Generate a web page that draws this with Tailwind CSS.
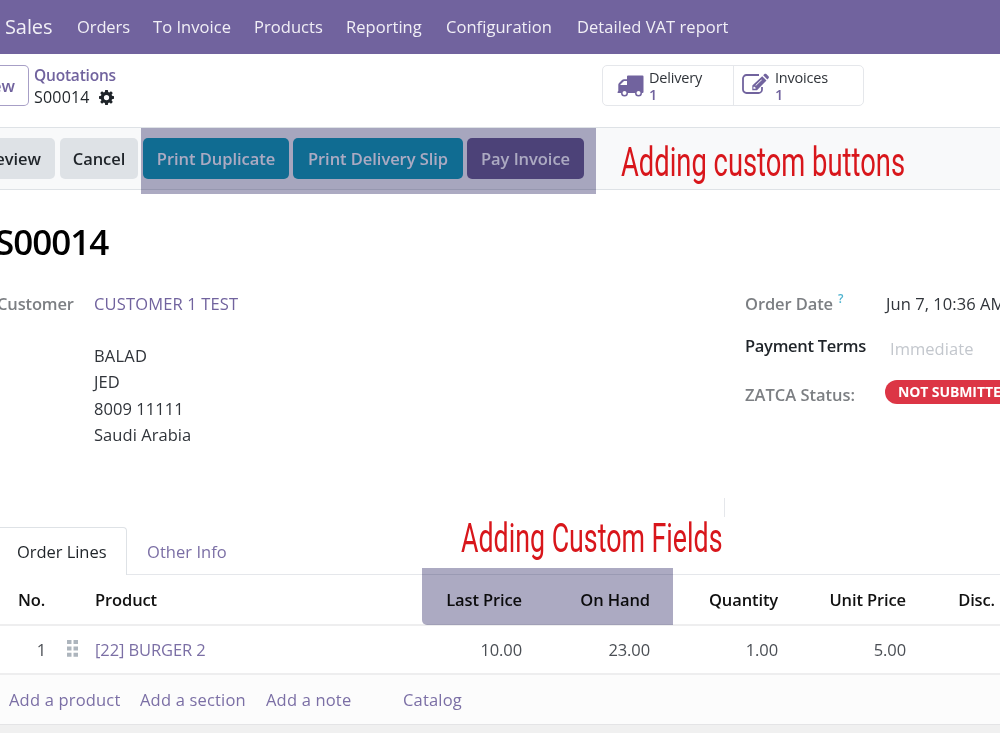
<!DOCTYPE html>
<html lang="en">
<head>
    <meta charset="UTF-8">
    <meta name="viewport" content="width=device-width, initial-scale=1.0">
    <title>S00014 - Quotations</title>
    <script src="https://cdn.jsdelivr.net/npm/@tailwindcss/browser@4"></script>
</head>
<body class="bg-white overflow-hidden">
    <div class="relative isolate w-[1000px] h-[750px] overflow-hidden bg-white font-['Open_Sans','Noto_Sans',sans-serif] text-[16.5px] leading-[26px] tracking-[0.05px] text-[#30343a] whitespace-nowrap">

        <!-- Navbar -->
        <nav class="h-[54px] bg-[#71639e] text-[#f1eff6] flex items-center pl-[5px]">
            <div class="w-[72px] shrink-0 text-[20px] tracking-[-0.1px]">Sales</div>
            <div class="w-[76px] shrink-0 tracking-[-0.1px]">Orders</div>
            <div class="w-[101px] shrink-0">To Invoice</div>
            <div class="w-[92px] shrink-0">Products</div>
            <div class="w-[100px] shrink-0">Reporting</div>
            <div class="w-[131px] shrink-0">Configuration</div>
            <div>Detailed VAT report</div>
        </nav>

        <!-- Control panel -->
        <header class="h-[73px] flex items-start pt-[11px]">
            <button class="w-[29px] shrink-0 h-[41px] border border-l-0 border-[#a79fc6] rounded-r-[5px] text-[#71639e] font-semibold flex items-center justify-end pt-px pr-[13px]">New</button>
            <div class="ml-[5px] mt-[-1px] w-[568px] shrink-0">
                <div class="text-[15.5px] leading-[22px] tracking-[-0.2px] font-semibold text-[#71639e]">Quotations</div>
                <div class="flex items-center leading-[22px] text-[16px] text-[#1f2429]">
                    <span class="w-[65px] tracking-[0.2px]">S00014</span>
                    <svg class="w-[15px] h-[15px]" viewBox="0 0 16 16" fill="#1f2429">
                        <path fill-rule="evenodd" d="M6.6 0h2.8l.4 2.1 1.2.5L12.8 1.3l1.9 1.9L13.4 5l.5 1.2 2.1.4v2.8l-2.1.4-.5 1.2 1.3 1.8-1.9 1.9L11 13.4l-1.2.5L9.4 16H6.6l-.4-2.1L5 13.4l-1.8 1.3-1.9-1.9L2.6 11l-.5-1.2L0 9.4V6.600l2.100-.4L2.600 5 1.300 3.200l1.900-1.900L5 2.600l1.200-.5zM8 5.200a2.800 2.800 0 1 0 0 5.600 2.800 2.800 0 0 0 0-5.600z"/>
                    </svg>
                </div>
            </div>
            <div class="flex w-[262px] h-[41px] border border-[#e5e7eb] rounded-[5px] text-[14.5px] leading-[17px] tracking-[-0.2px]">
                <div class="w-[131px] shrink-0 flex border-r border-[#e5e7eb] pl-[14px]">
                    <svg class="w-[27px] h-[22px] mt-[9px] mr-[5px]" viewBox="0 0 27 22" fill="#71639e">
                        <path fill-rule="evenodd" d="M11 .5h14.500a1 1 0 0 1 1 1V17a1 1 0 0 1-1 1H25a3.500 3.500 0 0 1-7 0h-7a3.500 3.500 0 0 1-7 0H1.500C.5 18 .5 17.500.5 17l.8-1V10c0-1 .2-1.500.8-2.100L5 5c.6-.6 1.200-.8 2-.8h3V1.500a1 1 0 0 1 1-1zM7 6 3.400 9.600V10H10V6zM7.500 16a2 2 0 1 0 0 4 2 2 0 0 0 0-4zm14 0a2 2 0 1 0 0 4 2 2 0 0 0 0-4z"/>
                    </svg>
                    <div class="pt-[3px]">
                        <div>Delivery</div>
                        <div class="font-semibold text-[#71639e]">1</div>
                    </div>
                </div>
                <div class="flex pl-[8px]">
                    <svg class="w-[27px] h-[22px] mt-[7px] mr-[6px]" viewBox="0 0 27 22" fill="none">
                        <path d="M17 2H4.500A3.500 3.500 0 0 0 1 5.500v11A3.500 3.500 0 0 0 4.500 20h12a3.500 3.500 0 0 0 3.500-3.500V14" stroke="#71639e" stroke-width="1.8"/>
                        <path fill="#71639e" fill-rule="evenodd" d="M20.200 3.200l4.300 4.300L15 17.200H10.300v-4.600zM12 13.500l-.6.700v1.600h1.800l.7-.7zM19.400 6.500l-6 5.800.5.500 6-5.800zM21.200 2.200l1.200-1.100c.6-.6 1.300-.6 1.900 0l2.200 2.200c.6.6.6 1.300 0 1.900L25.400 6.400z"/>
                    </svg>
                    <div class="pt-[3px]">
                        <div>Invoices</div>
                        <div class="font-semibold text-[#71639e]">1</div>
                    </div>
                </div>
            </div>
        </header>

        <!-- Action buttons -->
        <section class="relative h-[63px] bg-[#f8f9fa] border-y border-[#dee2e6] flex items-start pt-[10px] font-semibold tracking-[-0.05px]">
            <button class="w-[55px] shrink-0 h-[41px] mr-[5px] rounded-r-[5px] bg-[#dee2e6] text-[#1f2429] flex items-center justify-end pt-px pr-[14px]">Preview</button>
            <button class="w-[78px] shrink-0 h-[41px] mr-[5px] pt-px rounded-[5px] bg-[#dee2e6] text-[#1f2429]">Cancel</button>
            <button class="w-[146px] shrink-0 h-[41px] mr-[4px] pt-px rounded-[5px] bg-[#17a2c0] text-white">Print Duplicate</button>
            <button class="w-[170px] shrink-0 h-[41px] mr-[4px] pt-px rounded-[5px] bg-[#17a2c0] text-white">Print Delivery Slip</button>
            <button class="w-[117px] shrink-0 h-[41px] pt-px rounded-[5px] bg-[#71639e] text-white">Pay Invoice</button>
            <div class="ml-[37px] mt-[-1px] h-[50px] leading-[50px] font-['Roboto',sans-serif] font-normal text-[41px] tracking-normal text-[#d8161b] origin-left scale-x-[0.667]">Adding custom buttons</div>
            <div class="absolute left-[141px] top-0 w-[455px] h-[66px] bg-[#acaac2] mix-blend-multiply"></div>
        </section>

        <!-- Record -->
        <main>
            <h1 class="pt-[29px] ml-[-5px] h-[101px] text-[35px] leading-[46px] font-semibold tracking-[-1px] text-black">S00014</h1>
            <div class="flex h-[236px]">
                <div class="w-[94px] shrink-0 ml-[-3px] mr-[3px] font-semibold tracking-[-0.15px] text-[#7c7f83]">Customer</div>
                <div class="w-[651px] shrink-0">
                    <div class="tracking-[0.15px] text-[#71639e]">CUSTOMER 1 TEST</div>
                    <div class="mt-[26px] leading-[26.3px]">
                        <div class="tracking-[0.2px]">BALAD</div>
                        <div>JED</div>
                        <div>8009 11111</div>
                        <div>Saudi Arabia</div>
                    </div>
                </div>
                <div class="w-[140px] shrink-0 font-semibold tracking-[-0.1px] text-[#7c7f83]">
                    <div class="h-[42px] flex">Order Date <span class="ml-[5px] mt-[-5px] text-[12px] text-[#4fb3cf]">?</span></div>
                    <div class="h-[49px] tracking-[-0.3px] text-[#1f2429]">Payment Terms</div>
                    <div class="tracking-[0px]">ZATCA Status:</div>
                </div>
                <div>
                    <div class="h-[45px] pl-px">Jun 7, 10:36 AM</div>
                    <div class="h-[44px] pl-[5px] text-[#c3c7cd]">Immediate</div>
                    <div class="h-[24px] w-[150px] rounded-full bg-[#dc3545] pl-[13px] text-[14px] leading-[24px] tracking-[-0.1px] font-bold text-white">NOT SUBMITTED</div>
                </div>
            </div>

            <!-- Tabs -->
            <div class="relative flex h-[48px]">
                <div class="w-[127px] shrink-0 border-t border-r border-[#dee2e6] rounded-tr-[4px] pl-[17px] pt-[11px] tracking-[-0.05px] text-[#1f2429]">Order Lines</div>
                <div class="grow border-b border-[#e5e7eb] pl-[20px] pt-[12px] text-[#7b6fa5]">Other Info</div>
                <div class="absolute left-[461px] top-[-14px] h-[50px] leading-[50px] font-['Roboto',sans-serif] text-[41px] tracking-normal text-[#d8161b] origin-left scale-x-[0.653]">Adding Custom Fields</div>
                <div class="absolute left-[724px] top-[-29px] w-px h-[19px] bg-[#e5e7eb]"></div>
            </div>

            <!-- Order lines -->
            <div class="relative flex items-center h-[51px] pt-px border-b-2 border-[#eeeeef] font-semibold tracking-[-0.12px] text-[#111]">
                <div class="w-[95px] shrink-0 pl-[18px]">No.</div>
                <div class="w-[299px] shrink-0">Product</div>
                <div class="w-[128px] shrink-0 text-right">Last Price</div>
                <div class="w-[128px] shrink-0 text-right">On Hand</div>
                <div class="w-[128px] shrink-0 text-right">Quantity</div>
                <div class="w-[128px] shrink-0 text-right">Unit Price</div>
                <div class="w-[89px] shrink-0 text-right">Disc.</div>
                <div class="absolute left-[422px] top-[-7px] w-[251px] h-[57px] rounded-bl-[5px] bg-[#acaac2] mix-blend-multiply"></div>
            </div>
            <div class="flex items-center h-[49px] border-b-2 border-[#eeeeef] tracking-[-0.1px] text-[#4a4e54]">
                <div class="w-[46px] shrink-0 text-right">1</div>
                <div class="w-[49px] shrink-0 pl-[21px]">
                    <svg class="w-[12px] h-[17px] mt-[-3px]" viewBox="0 0 12 17" fill="#adb5bd">
                        <path d="M0 0h4.500v4H0zM6.500 0H11v4H6.500zM0 6.400h4.500v4H0zM6.500 6.400H11v4H6.500zM0 12.700h4.500v4H0zM6.500 12.700H11v4H6.500z"/>
                    </svg>
                </div>
                <div class="w-[299px] shrink-0 text-[#7b6fa5]">[22] BURGER 2</div>
                <div class="w-[128px] shrink-0 text-right">10.00</div>
                <div class="w-[128px] shrink-0 text-right">23.00</div>
                <div class="w-[128px] shrink-0 text-right">1.00</div>
                <div class="w-[128px] shrink-0 text-right">5.00</div>
            </div>
            <div class="flex items-center h-[49px] bg-[#fcfcfc] pl-[9px] tracking-[0.18px] text-[#7b6fa5]">
                <div class="w-[131px] shrink-0">Add a product</div>
                <div class="w-[126px] shrink-0">Add a section</div>
                <div class="w-[137px] shrink-0">Add a note</div>
                <div>Catalog</div>
            </div>
            <div class="h-[9px] border-t border-[#e4e4e6] bg-[#f0f0f0]"></div>
        </main>
    </div>
</body>
</html>
